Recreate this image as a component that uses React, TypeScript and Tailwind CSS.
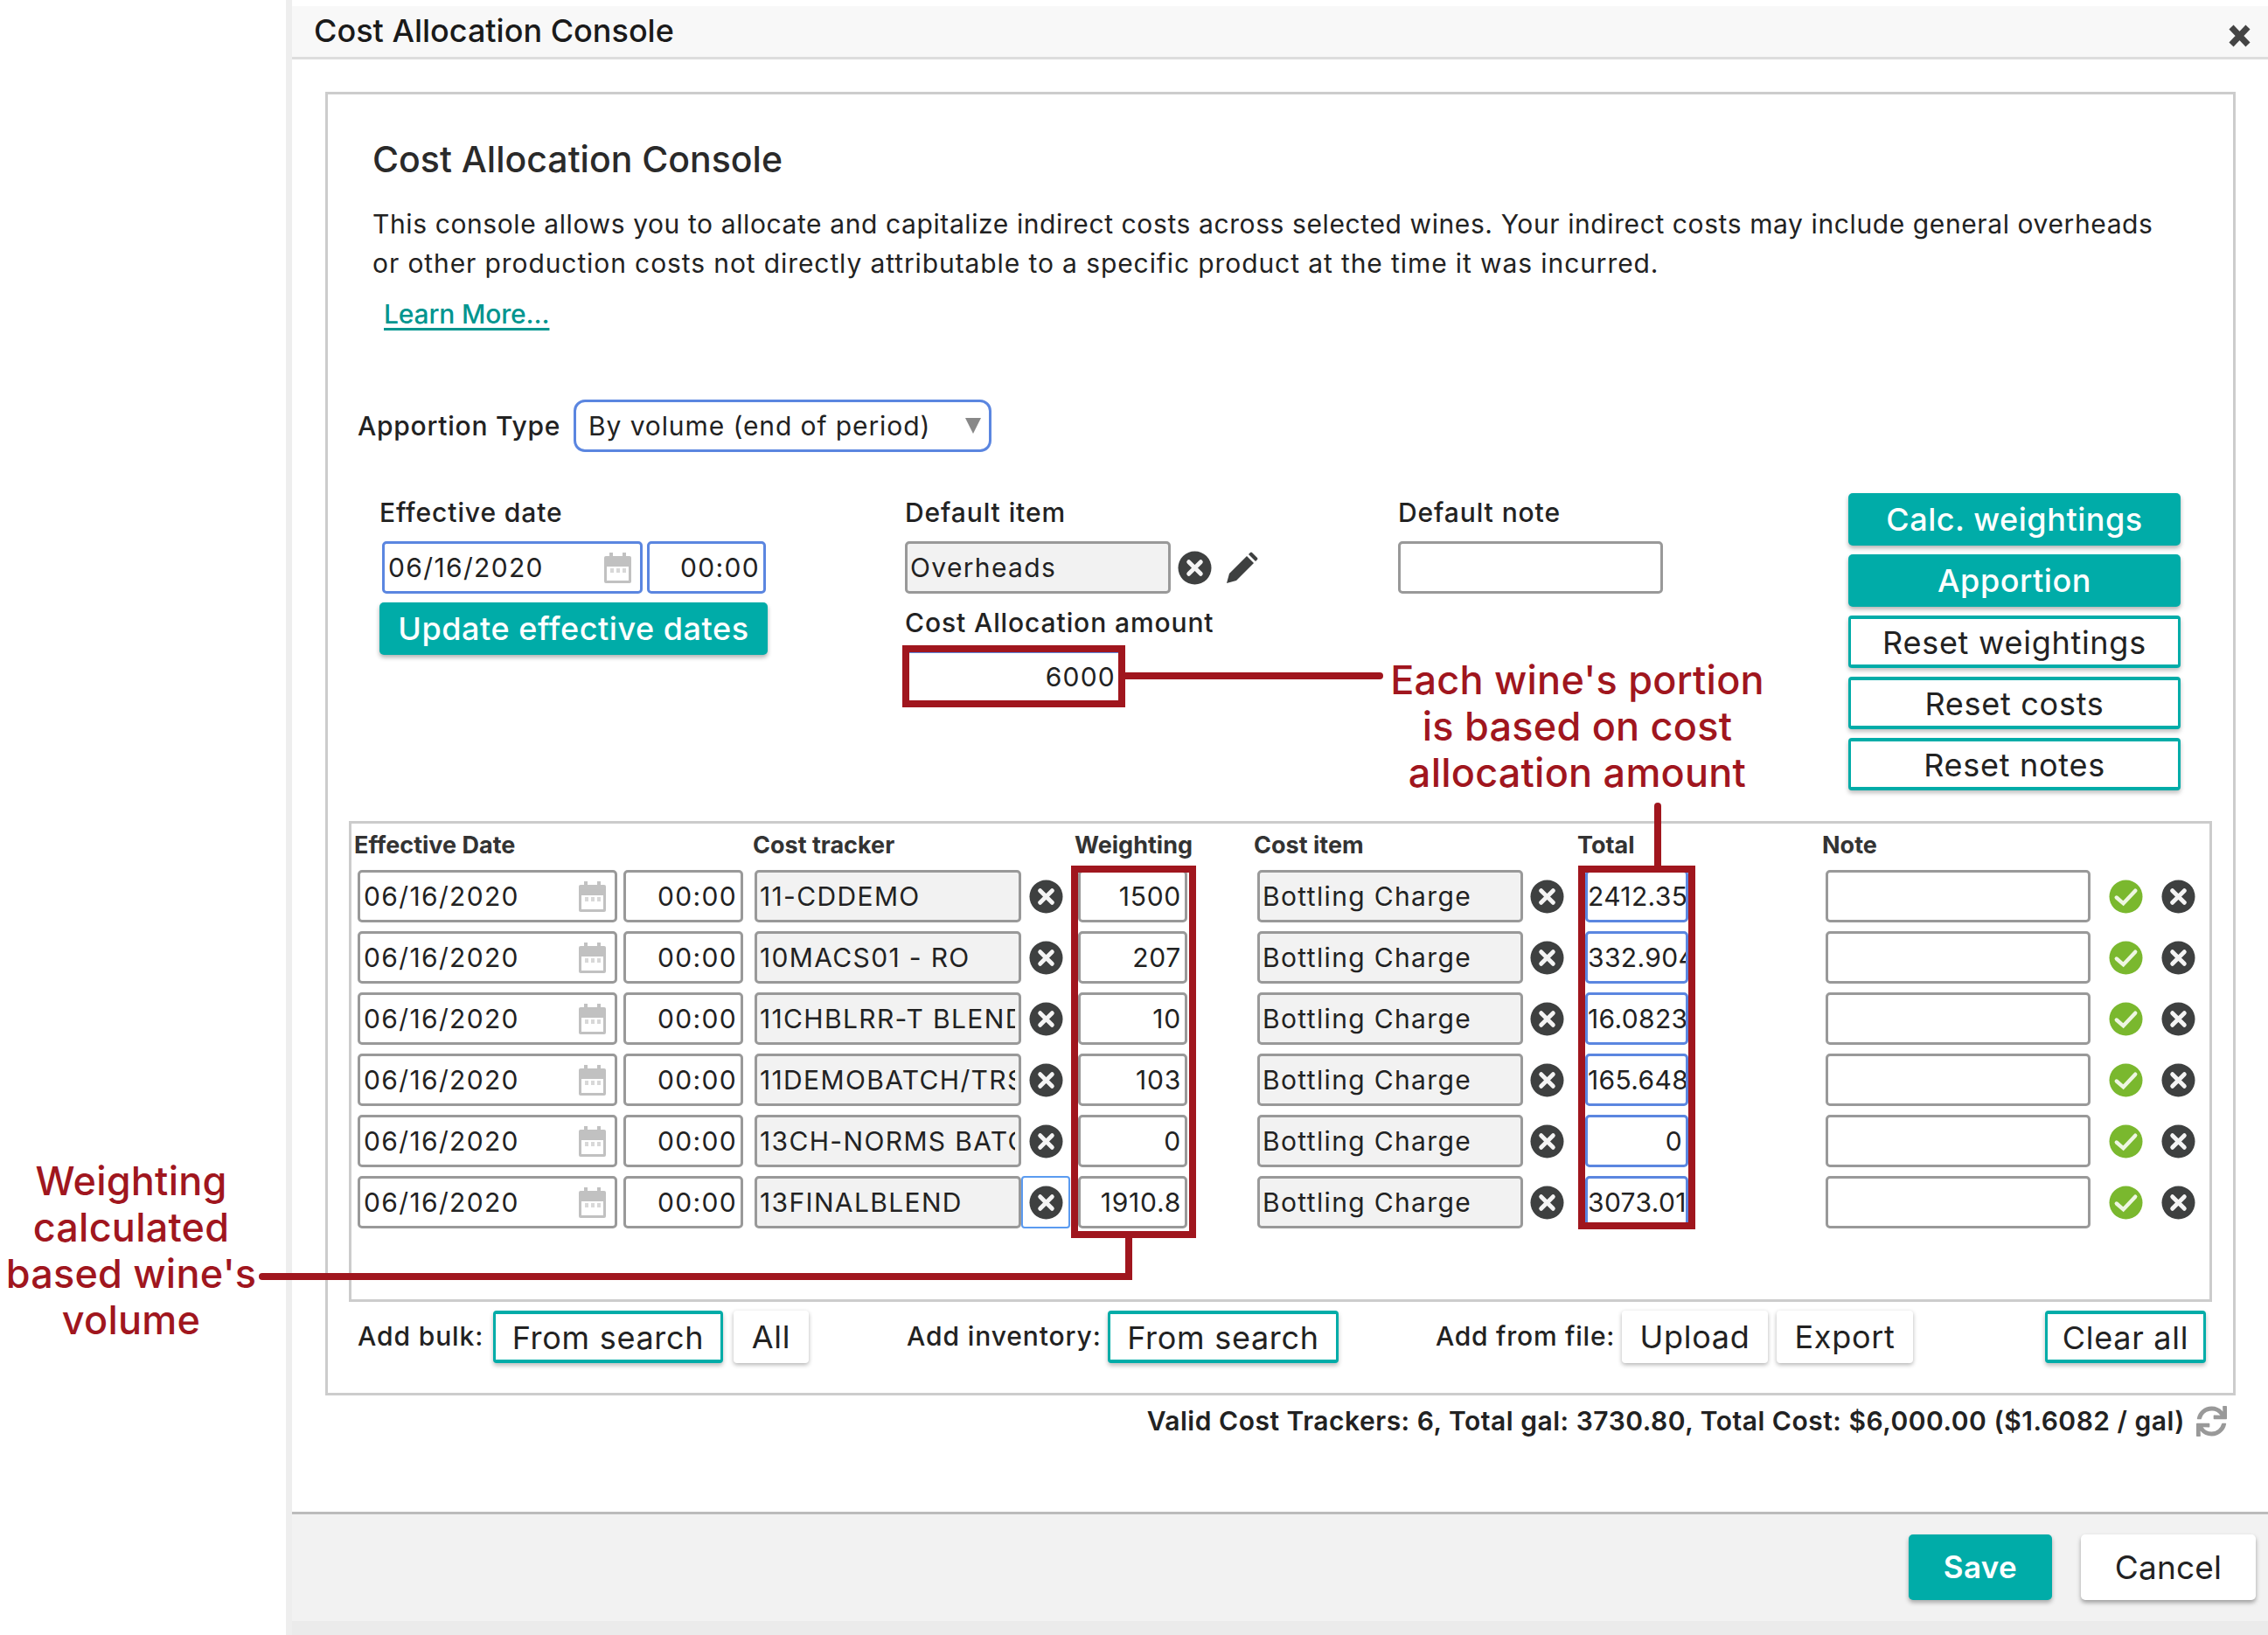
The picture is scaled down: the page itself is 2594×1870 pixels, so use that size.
import React from 'react';
import { FaSync } from 'react-icons/fa';

const RED = 'bg-[#a0161e]';
const FIELD = 'h-[60px] rounded-[5px] border-[3px] text-[30px] tracking-[0.045em] text-[#222] flex items-center overflow-hidden whitespace-nowrap';
const WHITE = 'border-[#999] bg-white';
const GRAY = 'border-[#999] bg-[#f2f2f2]';
const BLUE = 'border-[#5b86e0] bg-white';
const OUTLINE = 'h-[60px] rounded-[4px] bg-white border-x-[3px] border-y-4 border-[#00aca8] shadow-[0_3px_5px_rgba(0,0,0,0.25)] text-[36px] tracking-[0.02em] text-[#222] pt-[1px] flex items-center justify-center';
const SOLID = 'h-[60px] rounded-[5px] bg-[#00aca8] shadow-[0_3px_5px_rgba(0,0,0,0.3)] text-[36px] font-medium tracking-[0.015em] text-white flex items-center justify-center';
const PLAIN = 'h-[60px] rounded-[4px] bg-white shadow-[0_2px_5px_rgba(0,0,0,0.3)] text-[36px] tracking-[0.02em] text-[#222] flex items-center justify-center';
const LABEL = 'text-[30px] leading-[30px] tracking-[0.03em] font-medium text-[#222] -mt-[1px]';
const HEAD = 'text-[27px] leading-[30px] font-bold text-[#333]';

const rows = [
  { tracker: '11-CDDEMO', weight: '1500', total: '2412.3512' },
  { tracker: '10MACS01 - RO', weight: '207', total: '332.90482' },
  { tracker: '11CHBLRR-T BLEND', weight: '10', total: '16.0823' },
  { tracker: '11DEMOBATCH/TRS100', weight: '103', total: '165.648' },
  { tracker: '13CH-NORMS BATCH 01', weight: '0', total: '0' },
  { tracker: '13FINALBLEND', weight: '1910.8', total: '3073.01' },
];

const CircleX = () => (
  <svg viewBox="0 0 40 40" className="w-[39px] h-[39px]">
    <circle cx="20" cy="20" r="19.5" fill="#3e4040" />
    <path d="M13 13 27 27M27 13 13 27" stroke="#f4f4f4" strokeWidth="5" strokeLinecap="round" />
  </svg>
);

const CircleCheck = () => (
  <svg viewBox="0 0 40 40" className="w-[39px] h-[39px]">
    <circle cx="20" cy="20" r="19.5" fill="#7ab82e" />
    <path d="M9 21 17 28 31 13" fill="none" stroke="#eef6e2" strokeWidth="4.5" strokeLinecap="round" />
  </svg>
);

const Calendar = () => (
  <svg viewBox="0 0 31 35" className="w-[31px] h-[35px] shrink-0 opacity-70">
    <rect x="0" y="4" width="31" height="31" rx="2" fill="#a8a8a8" />
    <rect x="6" y="0" width="4" height="7" fill="#a8a8a8" />
    <rect x="21" y="0" width="4" height="7" fill="#a8a8a8" />
    <rect x="3" y="16" width="25" height="16" fill="#fff" />
    <rect x="7" y="18" width="4" height="5" fill="#c8c8c8" />
    <rect x="14" y="18" width="4" height="5" fill="#c8c8c8" />
    <rect x="21" y="18" width="4" height="5" fill="#c8c8c8" />
  </svg>
);

const Pencil = () => (
  <svg viewBox="0 0 36 36" className="w-[36px] h-[36px]">
    <path d="M0 36 3 25 23 5 31 13 11 33Z" fill="#3e4040" />
    <path d="M25 3 27 1Q28 0 29 1L35 7Q36 8 35 9L33 11Z" fill="#3e4040" />
  </svg>
);

const DateInput = ({ tone, className }: { tone: string; className: string }) => (
  <div className={`${FIELD} ${tone} ${className} pl-[4px] pr-[10px] justify-between`}>
    <span>06/16/2020</span>
    <Calendar />
  </div>
);

const TimeInput = ({ tone, className }: { tone: string; className: string }) => (
  <div className={`${FIELD} ${tone} ${className} justify-end pr-[4px]`}>00:00</div>
);

const Row = ({ tracker, weight, total, focused }: { tracker: string; weight: string; total: string; focused: boolean }) => (
  <div className="flex items-center h-[60px]">
    <DateInput tone={WHITE} className="w-[297px]" />
    <TimeInput tone={WHITE} className="w-[137px] ml-[7px]" />
    <div className={`${FIELD} ${GRAY} w-[305px] ml-[13px] pl-[3px] pr-[4px]`}>
      <div className="w-full overflow-hidden">{tracker}</div>
    </div>
    <div className={`w-[56px] h-[60px] flex items-center justify-center rounded-[4px] ${focused ? 'border-2 border-[#5b9bf0]' : ''}`}>
      <CircleX />
    </div>
    <div className={`h-[60px] rounded-[5px] border-[3px] border-[#999] bg-white text-[30px] tracking-[0.025em] text-[#222] flex items-center justify-end overflow-hidden whitespace-nowrap w-[125px] ml-[9px] pr-[4px]`}>{weight}</div>
    <div className={`${FIELD} ${GRAY} w-[304px] ml-[80px] px-[3px]`}>Bottling Charge</div>
    <div className="w-[55px] flex justify-center">
      <CircleX />
    </div>
    <div className={`h-[60px] rounded-[5px] border-[3px] border-[#5b86e0] bg-white text-[30px] tracking-[0.012em] text-[#222] flex items-center overflow-hidden whitespace-nowrap w-[118px] ml-[16px] ${total === '0' ? 'justify-end pr-[4px]' : ''}`}>{total}</div>
    <div className={`${FIELD} ${WHITE} w-[303px] ml-[157px]`} />
    <div className="ml-[21px]"><CircleCheck /></div>
    <div className="ml-[21px]"><CircleX /></div>
  </div>
);

const App = () => {
  return (
    <div className="relative w-[2594px] h-[1870px] bg-white overflow-hidden flex font-['Inter','Open_Sans',sans-serif] text-[#222]">
      <div className="w-[327px] shrink-0" />

      {/* dialog */}
      <div className="flex-1 flex flex-col border-l-[7px] border-[#eee] pt-[7px]">
        <div className="h-[61px] shrink-0 bg-[#f8f8f8] border-b-[3px] border-[#ddd] flex items-center justify-between pl-[25px] pr-[20px]">
          <span className="text-[36px] font-medium text-[#1a1a1a] -mt-[3px]">Cost Allocation Console</span>
          <svg viewBox="0 0 25 26" className="w-[25px] h-[26px] mt-[10px]">
            <path d="M3 3 22 23M22 3 3 23" stroke="#444" strokeWidth="7" />
          </svg>
        </div>

        <div className="flex-1 pt-[37px]">
          <div className="ml-[38px] mr-[37px] h-[1491px] border-[3px] border-[#ccc]">
            <h2 className="mt-[49px] ml-[51px] text-[41px] leading-[50px] font-medium text-[#2a2a2a]">Cost Allocation Console</h2>
            <p className="mt-[27px] ml-[51px] text-[30px] leading-[45px] tracking-[0.02em] text-[#222] whitespace-nowrap">
              This console allows you to allocate and capitalize indirect costs across selected wines. Your indirect costs may include general overheads
              <br />
              <span className="tracking-[0.03em]">or other production costs not directly attributable to a specific product at the time it was incurred.</span>
            </p>
            <a className="block w-fit mt-[15px] ml-[64px] text-[30px] leading-[40px] font-medium tracking-[-0.005em] text-[#00958f] underline decoration-[3px] underline-offset-[5px]">Learn More...</a>

            <div className="mt-[78px] ml-[34px] flex items-center">
              <span className="w-[247px] text-[30px] tracking-[0.025em] font-medium">Apportion Type</span>
              <div className="w-[478px] h-[60px] rounded-[13px] border-[3px] border-[#5b86e0] flex items-center justify-between pl-[14px] pr-[9px] text-[30px] tracking-[0.03em]">
                <span>By volume (end of period)</span>
                <svg viewBox="0 0 18 18" className="w-[18px] h-[18px]">
                  <path d="M0 0H18L9 18Z" fill="#888" />
                </svg>
              </div>
            </div>

            <div className="mt-[47px] ml-[59px] h-[375px] flex items-start">
              <div className="w-[601px] pt-[8px]">
                <div className={LABEL}>Effective date</div>
                <div className="mt-[18px] ml-[3px] flex gap-[5px]">
                  <DateInput tone={BLUE} className="w-[298px]" />
                  <TimeInput tone={BLUE} className="w-[136px]" />
                </div>
                <div className={`${SOLID} mt-[10px] w-[444px]`}>Update effective dates</div>
              </div>

              <div className="w-[564px] pt-[8px]">
                <div className={LABEL}>Default item</div>
                <div className="mt-[18px] flex items-center">
                  <div className={`${FIELD} ${GRAY} w-[304px] px-[3px]`}>Overheads</div>
                  <div className="ml-[8px]"><CircleX /></div>
                  <div className="ml-[17px]"><Pencil /></div>
                </div>
                <div className="text-[30px] leading-[30px] tracking-[0.03em] font-medium text-[#222] mt-[18px]">Cost Allocation amount</div>
                <div className="mt-[11px] -ml-[3px] w-[255px] h-[71px] border-[8px] border-[#a0161e]">
                  <div className="h-full border-t border-[#5b86e0] flex items-center justify-end pr-[3px] text-[30px] tracking-[0.04em]">6000</div>
                </div>
              </div>

              <div className="w-[515px] pt-[8px]">
                <div className={LABEL}>Default note</div>
                <div className={`${FIELD} ${WHITE} mt-[18px] w-[303px]`} />
              </div>

              <div className="w-[380px] flex flex-col gap-[10px]">
                <div className={SOLID}>Calc. weightings</div>
                <div className={SOLID}>Apportion</div>
                <div className={OUTLINE}>Reset weightings</div>
                <div className={OUTLINE}>Reset costs</div>
                <div className={OUTLINE}>Reset notes</div>
              </div>
            </div>

            {/* rows table */}
            <div className="relative ml-[24px] mr-[24px] h-[550px] border-[3px] border-[#ccc] pl-[7px] pt-[10px]">
              <div className={`${HEAD} flex -ml-[4px]`}>
                <span className="w-[456px]">Effective Date</span>
                <span className="w-[368px]">Cost tracker</span>
                <span className="w-[205px]">Weighting</span>
                <span className="w-[370px]">Cost item</span>
                <span className="w-[280px]">Total</span>
                <span>Note</span>
              </div>
              <div className="mt-[13px] flex flex-col gap-[10px]">
                {rows.map((r, i) => (
                  <Row key={r.tracker} tracker={r.tracker} weight={r.weight} total={r.total} focused={i === 5} />
                ))}
              </div>
              <div className="absolute left-[823px] top-[48px] w-[143px] h-[426px] border-[8px] border-[#a0161e]" />
              <div className="absolute left-[1403px] top-[48px] w-[134px] h-[416px] border-[8px] border-[#a0161e]" />
            </div>

            <div className="mt-[10px] ml-[34px] flex items-center">
              <span className="w-[155px] text-[30px] tracking-[0.03em] font-medium -mt-[1px]">Add bulk:</span>
              <div className={`${OUTLINE} w-[263px]`}>From search</div>
              <div className={`${PLAIN} w-[86px] ml-[12px]`}>All</div>
              <span className="w-[230px] ml-[112px] text-[30px] tracking-[0.03em] font-medium -mt-[1px]">Add inventory:</span>
              <div className={`${OUTLINE} w-[264px]`}>From search</div>
              <span className="w-[213px] ml-[111px] text-[30px] tracking-[0.025em] font-medium whitespace-nowrap -mt-[1px]">Add from file:</span>
              <div className={`${PLAIN} w-[167px]`}>Upload</div>
              <div className={`${PLAIN} w-[156px] ml-[10px]`}>Export</div>
              <div className={`${OUTLINE} w-[184px] ml-[151px]`}>Clear all</div>
            </div>
          </div>

          <div className="mt-[10px] h-[38px] flex items-center justify-end gap-[13px] pr-[47px]">
            <span className="text-[30px] tracking-[0.017em] font-semibold text-[#222]">Valid Cost Trackers: 6, Total gal: 3730.80, Total Cost: $6,000.00 ($1.6082 / gal)</span>
            <FaSync className="w-[35px] h-[35px] text-[#999]" />
          </div>
        </div>

        <div className="h-[125px] shrink-0 bg-[#f2f2f2] border-t-[3px] border-[#bbb] pt-[23px] pr-[14px] flex justify-end gap-[33px]">
          <div className="w-[164px] h-[75px] rounded-[5px] bg-[#00aca8] shadow-[0_3px_5px_rgba(0,0,0,0.3)] text-[35px] tracking-[0.01em] font-semibold text-white flex items-center justify-center">Save</div>
          <div className="w-[200px] h-[75px] rounded-[5px] bg-white shadow-[0_3px_5px_rgba(0,0,0,0.35)] text-[37px] tracking-[0.005em] text-[#222] flex items-center justify-center">Cancel</div>
        </div>
        <div className="h-[16px] shrink-0 bg-[#ebebeb]" />
      </div>

      {/* annotations */}
      <div className={`absolute left-[1287px] top-[769px] w-[295px] h-[8px] rounded-r-full ${RED}`} />
      <div className={`absolute left-[1892px] top-[918px] w-[8px] h-[72px] rounded-t-full ${RED}`} />
      <div className={`absolute left-[296px] top-[1456px] w-[999px] h-[8px] rounded-l-full ${RED}`} />
      <div className={`absolute left-[1287px] top-[1416px] w-[8px] h-[48px] ${RED}`} />

      <div className="absolute left-[1580px] top-[751px] w-[448px] text-center text-[45px] leading-[53px] tracking-[0.005em] font-medium text-[#a0161e]">
        Each wine's portion
        <br />
        is based on cost
        <br />
        allocation amount
      </div>
      <div className="absolute left-0 top-[1324px] w-[300px] text-center text-[45px] leading-[53px] tracking-[0.005em] font-medium text-[#a0161e]">
        Weighting
        <br />
        calculated
        <br />
        based wine's
        <br />
        volume
      </div>
    </div>
  );
};

export default App;
